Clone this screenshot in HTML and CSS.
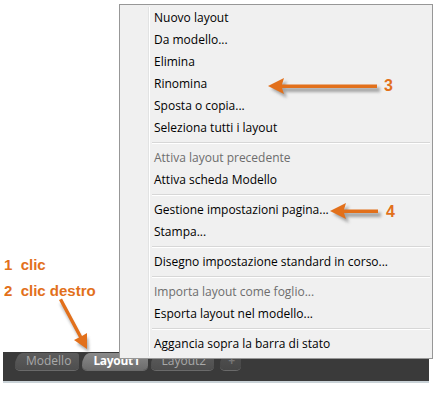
FILE: index.html
```html
<!DOCTYPE html>
<html lang="it">
<head>
  <meta charset="UTF-8" />
  <title>Layout menu</title>
  <link rel="stylesheet" href="styles.css">
</head>
<body>
  <div class="stage">
    <div class="steps">
      <div class="step">1&nbsp; clic</div>
      <div class="step">2&nbsp; clic destro</div>
    </div>

    <div class="tabbar">
      <div class="tab">Modello</div>
      <div class="tab active">Layout1</div>
      <div class="tab">Layout2</div>
      <div class="tab plus">+</div>
    </div>

    <ul class="menu">
      <li>Nuovo layout</li>
      <li>Da modello...</li>
      <li>Elimina</li>
      <li>Rinomina</li>
      <li>Sposta o copia...</li>
      <li>Seleziona tutti i layout</li>
      <li class="sep"></li>
      <li class="off">Attiva layout precedente</li>
      <li>Attiva scheda Modello</li>
      <li class="sep"></li>
      <li>Gestione impostazioni pagina...</li>
      <li>Stampa...</li>
      <li class="sep"></li>
      <li>Disegno impostazione standard in corso...</li>
      <li class="sep"></li>
      <li class="off">Importa layout come foglio...</li>
      <li>Esporta layout nel modello...</li>
      <li class="sep"></li>
      <li>Aggancia sopra la barra di stato</li>
    </ul>

    <!-- callout arrows -->
    <svg class="arrows" width="440" height="396" viewBox="0 0 440 396">
      <defs>
        <filter id="sh" x="-20%" y="-50%" width="140%" height="200%">
          <feGaussianBlur stdDeviation="1.6"/>
        </filter>
      </defs>
      <g fill="#8a8a8a" opacity="0.75" filter="url(#sh)">
        <path d="M271 89 L287 81 L285 87.5 L380 87.5 L380 92 L285 92 L287 98 Z"/>
        <path d="M333 214 L349 206 L347 212.5 L381 212.5 L381 217 L347 217 L349 223 Z"/>
        <path d="M62 303 L83 340 L88 337 L89 352 L77 344 L81 341 L60 304 Z"/>
      </g>
      <g fill="#e2701b">
        <path d="M268 86 L284 78 L282 84.5 L377 84.5 L377 88 L282 88 L284 94 Z"/>
        <path d="M330 211 L346 203 L344 209.5 L378 209.5 L378 213 L344 213 L346 219 Z"/>
      </g>
      <g fill="#e2701b">
        <path d="M59 300 L62 298.5 L82 336 L87 333 L87 349 L74 340 L79 337.5 Z"/>
      </g>
    </svg>
    <div class="num n3">3</div>
    <div class="num n4">4</div>
  </div>
</body>
</html>
```

FILE: styles.css
```css
body {
  margin: 0;
  background: #ffffff;
  font-family: 'Open Sans', 'Noto Sans', sans-serif;
}

.stage {
  position: relative;
  width: 440px;
  height: 396px;
  overflow: hidden;
}

.steps {
  padding: 256px 0 0 4px;
  height: 352px;
  box-sizing: border-box;
  display: flex;
  flex-direction: column;
  gap: 8px;
}

.step {
  font-family: 'Liberation Sans', Arial, sans-serif;
  font-weight: bold;
  font-size: 15px;
  line-height: 18px;
  color: #e2701b;
}

.tabbar {
  margin-left: 3px;
  width: 414px;
  height: 29px;
  background: #3a3a3a;
  border-bottom: 2px solid #c9d2d7;
  display: flex;
  align-items: flex-start;
  padding-left: 12px;
  box-sizing: content-box;
  gap: 3px;
}

.tab {
  height: 17px;
  margin-top: 1px;
  padding: 0 8px 0 11px;
  font-size: 12px;
  line-height: 16px;
  color: #a9a9a9;
  background: linear-gradient(#5c5c5c, #4e4e4e);
  border-radius: 9px 3px 6px 6px / 14px 3px 5px 5px;
  box-shadow: 0 1px 0 #6a6a6a;
}

.tab.active {
  background: linear-gradient(#8a8a8a, #6c6c6c);
  color: #ffffff;
  font-weight: bold;
  letter-spacing: -0.3px;
}

.tab.plus {
  margin-left: 3px;
  padding: 0 6px 0 8px;
  font-weight: bold;
  color: #777;
  background: linear-gradient(#505050, #464646);
}

.menu {
  position: absolute;
  left: 119px;
  top: 4px;
  width: 308px;
  margin: 0;
  padding: 2px 2px 3px 2px;
  list-style: none;
  background: #f0f0f0;
  border: 1px solid #979797;
  box-sizing: content-box;
  font-size: 12px;
}

.menu::before {
  content: "";
  position: absolute;
  left: 28px;
  top: 2px;
  bottom: 2px;
  width: 1px;
  background: #e2e3e3;
  box-shadow: 1px 0 0 #ffffff;
}

.menu li {
  height: 22px;
  line-height: 22px;
  padding-left: 32px;
  color: #000000;
  white-space: nowrap;
}

.menu li.off {
  color: #6d6d6d;
}

.menu li.sep {
  height: 8px;
  margin-left: 30px;
  padding: 0;
  position: relative;
}

.menu li.sep::after {
  content: "";
  position: absolute;
  left: 0;
  right: 0;
  top: 3px;
  height: 1px;
  background: #d7d7d7;
  box-shadow: 0 1px 0 #ffffff;
}

.arrows {
  position: absolute;
  left: 0;
  top: 0;
  pointer-events: none;
}

.num {
  position: absolute;
  font-family: 'Liberation Sans', Arial, sans-serif;
  font-weight: bold;
  font-size: 16px;
  line-height: 18px;
  color: #e2701b;
}

.n3 {
  left: 384px;
  top: 77px;
}

.n4 {
  left: 386px;
  top: 203px;
}
```
